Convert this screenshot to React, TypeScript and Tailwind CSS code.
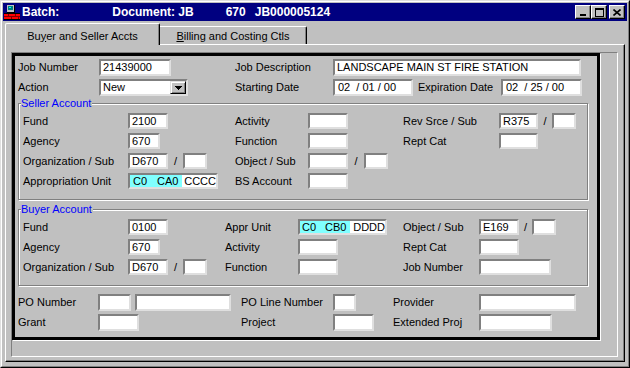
import React from 'react';

type FieldProps = { className: string; children?: React.ReactNode };

const Field = ({ className, children }: FieldProps) => (
  <div
    className={`flex items-center shrink-0 bg-white border-2 border-t-[#808080] border-l-[#808080] border-r-[#dfdfdf] border-b-[#dfdfdf] text-[11px] leading-none whitespace-pre overflow-hidden ${className}`}
  >
    {children}
  </div>
);

const Slash = ({ className }: { className: string }) => (
  <span className={`shrink-0 text-center ${className}`}>/</span>
);

const Label = ({ className, children }: { className: string; children: React.ReactNode }) => (
  <span className={`shrink-0 whitespace-nowrap ${className}`}>{children}</span>
);

// dithered cyan highlight, flattened to its average colour
const checker = 'bg-[#80ffff]';

const Group = ({ title, className, children }: { title: string; className: string; children: React.ReactNode }) => (
  <div
    className={`relative w-[570px] border border-[#808080] shadow-[inset_1px_1px_0_#ffffff,1px_1px_0_#ffffff] pl-[4px] pt-[9px] pb-[10px] flex flex-col gap-[4px] ${className}`}
  >
    <span className="absolute -top-[7px] left-[2px] bg-[#c0c0c0] pr-[1px] leading-[13px] text-[#0000ff]">
      {title}
    </span>
    {children}
  </div>
);

const WinButton = ({ children, className = '' }: { children: React.ReactNode; className?: string }) => (
  <div
    className={`w-[16px] h-[14px] bg-[#c0c0c0] border border-t-white border-l-white border-r-black border-b-black shadow-[inset_-1px_-1px_0_#808080] flex items-center justify-center ${className}`}
  >
    {children}
  </div>
);

const AppIcon = () => (
  <svg width="16" height="16" viewBox="0 0 16 16" shapeRendering="crispEdges">
    <rect x="0" y="9" width="16" height="7" fill="#ff0000" />
    <rect x="0" y="9" width="16" height="1" fill="#000000" />
    <rect x="0" y="12" width="16" height="1" fill="#800000" />
    <rect x="0" y="15" width="16" height="1" fill="#000000" />
    <rect x="4" y="10" width="1" height="2" fill="#800000" />
    <rect x="11" y="10" width="1" height="2" fill="#800000" />
    <rect x="7" y="13" width="1" height="2" fill="#800000" />
    <rect x="14" y="13" width="1" height="2" fill="#800000" />
    <rect x="3" y="1" width="8" height="8" fill="#000000" />
    <rect x="3" y="1" width="7" height="7" fill="#c0c0c0" />
    <rect x="4" y="2" width="5" height="4" fill="#008080" />
    <rect x="5" y="3" width="2" height="1" fill="#00ffff" />
  </svg>
);

export default function App() {
  return (
    <div className="w-[630px] h-[368px] bg-[#c0c0c0] border border-t-[#dfdfdf] border-l-[#dfdfdf] border-r-black border-b-black font-['Liberation_Sans',Arial,sans-serif] text-[11px] text-black leading-none">
      <div className="h-full border border-t-white border-l-white border-r-[#808080] border-b-[#808080] p-px">
        {/* Title bar */}
        <div className="h-[18px] bg-[#000080] flex items-center pl-[1px] pr-[2px] text-white font-bold text-[12px]">
          <AppIcon />
          <span className="ml-[2px]">Batch:</span>
          <span className="ml-[53px]">Document: JB</span>
          <span className="ml-[32px]">670</span>
          <span className="ml-[9px]">JB000005124</span>
          <div className="ml-auto flex">
            <WinButton>
              <svg width="8" height="8" viewBox="0 0 8 8" shapeRendering="crispEdges">
                <rect x="1" y="6" width="6" height="2" fill="#000" />
              </svg>
            </WinButton>
            <WinButton>
              <svg width="9" height="9" viewBox="0 0 9 9" shapeRendering="crispEdges">
                <rect x="0" y="0" width="9" height="2" fill="#000" />
                <rect x="0" y="0" width="1" height="9" fill="#000" />
                <rect x="8" y="0" width="1" height="9" fill="#000" />
                <rect x="0" y="8" width="9" height="1" fill="#000" />
              </svg>
            </WinButton>
            <WinButton className="ml-[2px]">
              <svg width="8" height="7" viewBox="0 0 8 7">
                <path d="M0.5 0.5 L7.5 6.5 M7.5 0.5 L0.5 6.5" stroke="#000" strokeWidth="1.6" />
              </svg>
            </WinButton>
          </div>
        </div>

        {/* Tabs */}
        <div className="flex items-end h-[21px] mt-[2px] pl-[2px]">
          <div className="relative z-10 -mb-px h-[22px] w-[155px] border-t border-l border-r border-t-white border-l-white border-r-black shadow-[inset_-1px_0_0_#808080] rounded-tl-[2px] rounded-tr-[2px] flex items-center justify-center pt-[3px] bg-[#c0c0c0]">
            Bu<span className="underline">y</span>er and Seller Accts
          </div>
          <div className="h-[18px] w-[147px] border-t border-r border-t-white border-r-black shadow-[inset_-1px_0_0_#808080] rounded-tr-[2px] flex items-center justify-center pt-[2px]">
            <span className="underline">B</span>illing and Costing Ctls
          </div>
        </div>

        {/* Tab panel */}
        <div className="ml-[2px] w-[620px] h-[318px] border border-t-white border-l-white border-r-black border-b-black shadow-[inset_-1px_-1px_0_#808080] pl-[5px] pt-[7px]">
          <div className="w-[607px] h-[305px] border border-t-[#808080] border-l-[#808080] border-r-white border-b-white">
            <div className="w-[588px] h-[287px] border-[3px] border-black shadow-[1px_1px_0_#ffffff] pl-[3px] pt-[3px]">
              {/* Top rows */}
              <div className="flex items-center h-[17px]">
                <div className="flex items-center w-[217px]">
                  <Label className="w-[81px]">Job Number</Label>
                  <Field className="w-[72px] h-[17px] pl-[2px]">21439000</Field>
                </div>
                <Label className="w-[98px]">Job Description</Label>
                <Field className="w-[248px] h-[17px] pl-[2px]">LANDSCAPE MAIN ST FIRE STATION</Field>
              </div>
              <div className="flex items-center h-[17px] mt-[3px]">
                <div className="flex items-center w-[217px]">
                  <Label className="w-[81px]">Action</Label>
                  <Field className="w-[89px] h-[17px] pl-[2px]">
                    <span>New</span>
                    <div className="ml-auto w-[16px] h-full bg-[#c0c0c0] border border-t-[#dfdfdf] border-l-[#dfdfdf] border-r-black border-b-black shadow-[inset_1px_1px_0_#ffffff,inset_-1px_-1px_0_#808080] flex items-center justify-center">
                      <svg width="7" height="4" viewBox="0 0 7 4" shapeRendering="crispEdges">
                        <path d="M0 0 H7 L3.5 4 Z" fill="#000" />
                      </svg>
                    </div>
                  </Field>
                </div>
                <Label className="w-[98px]">Starting Date</Label>
                <Field className="w-[80px] h-[17px] pl-[3px]">02  / 01 / 00</Field>
                <Label className="w-[83px] ml-[5px]">Expiration Date</Label>
                <Field className="w-[81px] h-[17px] pl-[3px]">02  / 25 / 00</Field>
              </div>

              {/* Seller account */}
              <Group title="Seller Account" className="mt-[7px]">
                <div className="flex items-center h-[16px]">
                  <div className="flex items-center w-[212px]">
                    <Label className="w-[105px]">Fund</Label>
                    <Field className="w-[40px] h-[16px] pl-[2px]">2100</Field>
                  </div>
                  <div className="flex items-center w-[168px]">
                    <Label className="w-[73px]">Activity</Label>
                    <Field className="w-[40px] h-[16px]" />
                  </div>
                  <Label className="w-[96px]">Rev Srce / Sub</Label>
                  <Field className="w-[39px] h-[16px] pl-[2px]">R375</Field>
                  <Slash className="w-[14px]" />
                  <Field className="w-[24px] h-[16px]" />
                </div>
                <div className="flex items-center h-[16px]">
                  <div className="flex items-center w-[212px]">
                    <Label className="w-[105px]">Agency</Label>
                    <Field className="w-[32px] h-[16px] pl-[2px]">670</Field>
                  </div>
                  <div className="flex items-center w-[168px]">
                    <Label className="w-[73px]">Function</Label>
                    <Field className="w-[40px] h-[16px]" />
                  </div>
                  <Label className="w-[96px]">Rept Cat</Label>
                  <Field className="w-[39px] h-[16px]" />
                </div>
                <div className="flex items-center h-[16px]">
                  <div className="flex items-center w-[212px]">
                    <Label className="w-[105px]">Organization / Sub</Label>
                    <Field className="w-[40px] h-[16px] pl-[2px]">D670</Field>
                    <Slash className="w-[15px]" />
                    <Field className="w-[24px] h-[16px]" />
                  </div>
                  <div className="flex items-center w-[168px]">
                    <Label className="w-[73px]">Object / Sub</Label>
                    <Field className="w-[40px] h-[16px]" />
                    <Slash className="w-[16px]" />
                    <Field className="w-[24px] h-[16px]" />
                  </div>
                </div>
                <div className="flex items-center h-[16px]">
                  <div className="flex items-center w-[212px]">
                    <Label className="w-[105px]">Appropriation Unit</Label>
                    <Field className="w-[90px] h-[16px]">
                      <span className={`h-full w-[58px] flex items-center pl-[3px] ${checker}`}>
                        <span>C0</span>
                        <span className="ml-[10px]">CA0</span>
                      </span>
                      <span className="pl-[2px]">CCCC</span>
                    </Field>
                  </div>
                  <div className="flex items-center w-[168px]">
                    <Label className="w-[73px]">BS Account</Label>
                    <Field className="w-[40px] h-[16px]" />
                  </div>
                </div>
              </Group>

              {/* Buyer account */}
              <Group title="Buyer Account" className="mt-[9px]">
                <div className="flex items-center h-[16px]">
                  <div className="flex items-center w-[202px]">
                    <Label className="w-[105px]">Fund</Label>
                    <Field className="w-[40px] h-[16px] pl-[2px]">0100</Field>
                  </div>
                  <div className="flex items-center w-[178px]">
                    <Label className="w-[73px]">Appr Unit</Label>
                    <Field className="w-[89px] h-[16px]">
                      <span className={`h-full w-[52px] flex items-center pl-[2px] ${checker}`}>
                        <span>C0</span>
                        <span className="ml-[9px]">CB0</span>
                      </span>
                      <span className="pl-[3px]">DDDD</span>
                    </Field>
                  </div>
                  <Label className="w-[76px]">Object / Sub</Label>
                  <Field className="w-[40px] h-[16px] pl-[2px]">E169</Field>
                  <Slash className="w-[13px]" />
                  <Field className="w-[24px] h-[16px]" />
                </div>
                <div className="flex items-center h-[16px]">
                  <div className="flex items-center w-[202px]">
                    <Label className="w-[105px]">Agency</Label>
                    <Field className="w-[32px] h-[16px] pl-[2px]">670</Field>
                  </div>
                  <div className="flex items-center w-[178px]">
                    <Label className="w-[73px]">Activity</Label>
                    <Field className="w-[40px] h-[16px]" />
                  </div>
                  <Label className="w-[76px]">Rept Cat</Label>
                  <Field className="w-[40px] h-[16px]" />
                </div>
                <div className="flex items-center h-[16px]">
                  <div className="flex items-center w-[202px]">
                    <Label className="w-[105px]">Organization / Sub</Label>
                    <Field className="w-[40px] h-[16px] pl-[2px]">D670</Field>
                    <Slash className="w-[15px]" />
                    <Field className="w-[24px] h-[16px]" />
                  </div>
                  <div className="flex items-center w-[178px]">
                    <Label className="w-[73px]">Function</Label>
                    <Field className="w-[40px] h-[16px]" />
                  </div>
                  <Label className="w-[76px]">Job Number</Label>
                  <Field className="w-[72px] h-[16px]" />
                </div>
              </Group>

              {/* Bottom rows */}
              <div className="flex items-center h-[17px] mt-[8px]">
                <div className="flex items-center w-[223px]">
                  <Label className="w-[80px]">PO Number</Label>
                  <Field className="w-[33px] h-[17px]" />
                  <Field className="w-[96px] h-[17px] ml-[4px]" />
                </div>
                <div className="flex items-center w-[152px]">
                  <Label className="w-[92px]">PO Line Number</Label>
                  <Field className="w-[23px] h-[17px]" />
                </div>
                <Label className="w-[86px]">Provider</Label>
                <Field className="w-[97px] h-[17px]" />
              </div>
              <div className="flex items-center h-[17px] mt-[3px]">
                <div className="flex items-center w-[223px]">
                  <Label className="w-[80px]">Grant</Label>
                  <Field className="w-[41px] h-[17px]" />
                </div>
                <div className="flex items-center w-[152px]">
                  <Label className="w-[92px]">Project</Label>
                  <Field className="w-[41px] h-[17px]" />
                </div>
                <Label className="w-[86px]">Extended Proj</Label>
                <Field className="w-[73px] h-[17px]" />
              </div>
            </div>
          </div>
        </div>
      </div>
    </div>
  );
}
